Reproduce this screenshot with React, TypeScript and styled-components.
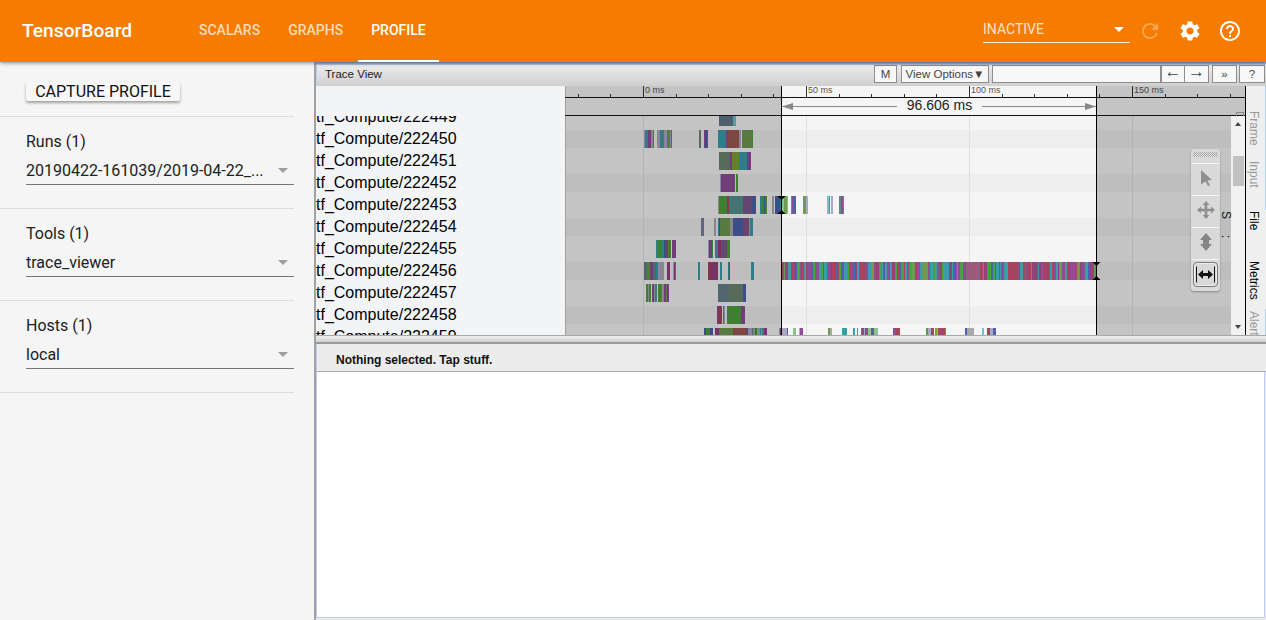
import React from 'react';
import styled, { createGlobalStyle } from 'styled-components';
import { MdRefresh, MdSettings, MdHelpOutline } from 'react-icons/md';

type Bar = [number, number, string];

const C = {
  teal: '#3d9cab',
  green: '#4f9f3f',
  purple: '#8c4f96',
  olive: '#79a52c',
  blue: '#4c62ad',
  slate: '#66808a',
  sage: '#6f8570',
  red: '#9c5a52',
  moss: '#719a50',
  plum: '#93427b',
  rose: '#a8445e',
  gray: '#a9a9a9',
  lilac: '#b0a4c8',
  aqua: '#6cc4cf',
  mint: '#8cc48c',
};

const LOOSE = [C.teal, C.green, C.purple, C.blue, C.slate, C.gray, C.moss, C.lilac, C.teal, C.plum];
const DENSE = [C.rose, C.purple, C.teal, C.plum, C.green, C.blue, C.rose, C.teal, C.moss, C.purple];

// small seeded generator so the stripes stay the same on every load
const stripes = (from: number, to: number, seed: number, colours: string[], gaps = 0): Bar[] => {
  const out: Bar[] = [];
  let s = seed;
  let x = from;
  const next = () => {
    s = (s * 9301 + 49297) % 233280;
    return s / 233280;
  };
  next();
  next();
  next();
  while (x < to) {
    const w = Math.min(to - x, 1 + Math.floor(next() * 3));
    if (next() >= gaps) out.push([x, w, colours[Math.floor(next() * colours.length)]]);
    x += w;
  }
  return out;
};

const ROWS: { top: number; label: string; bars: Bar[] }[] = [
  {
    top: 108,
    label: 'tf_Compute/222449',
    bars: [[719, 14, '#64778a'], [733, 3, C.aqua]],
  },
  {
    top: 130,
    label: 'tf_Compute/222450',
    bars: [
      ...stripes(644, 672, 11, LOOSE, 0.15),
      [699, 2, C.sage], [704, 1, C.purple], [705, 2, C.blue], [707, 1, C.purple],
      [718, 8, C.teal], [726, 2, C.purple], [728, 11, C.red], [739, 2, C.lilac],
      [742, 10, C.moss], [752, 1, C.green],
    ],
  },
  {
    top: 152,
    label: 'tf_Compute/222451',
    bars: [
      [719, 11, C.sage], [730, 2, C.purple], [732, 7, C.olive], [739, 8, C.teal],
      [747, 2, C.purple], [749, 1, C.blue], [750, 1, C.purple],
    ],
  },
  {
    top: 174,
    label: 'tf_Compute/222452',
    bars: [[720, 1, C.lilac], [721, 14, C.purple], [736, 2, C.green]],
  },
  {
    top: 196,
    label: 'tf_Compute/222453',
    bars: [
      [718, 1, C.gray], [719, 8, C.green], [727, 2, C.rose], [729, 14, '#55918f'],
      [743, 9, '#7b5a8c'], ...stripes(752, 756, 5, LOOSE),
      ...stripes(760, 767, 17, [C.teal, C.green, C.blue]), [772, 2, C.gray],
      ...stripes(775, 781, 23, [C.teal, C.blue, C.purple]),
      [782, 2, C.mint], [784, 3, C.moss], [787, 1, C.mint],
      [791, 1, C.teal], [792, 1, C.purple], [793, 3, C.blue],
      [803, 3, C.moss], [806, 2, C.lilac], [827, 2, C.aqua], [829, 1, C.teal],
      [831, 2, C.lilac], [839, 2, C.slate], [841, 2, C.purple], [843, 1, C.green],
    ],
  },
  {
    top: 218,
    label: 'tf_Compute/222454',
    bars: [
      [701, 3, '#75809a'], [714, 2, C.gray], [718, 1, C.teal], [719, 1, C.blue],
      [720, 10, C.moss], [730, 3, C.gray], [733, 10, C.blue], [743, 6, '#85548c'],
      [749, 1, C.gray], [750, 3, C.teal],
    ],
  },
  {
    top: 240,
    label: 'tf_Compute/222455',
    bars: [
      ...stripes(656, 669, 31, [C.teal, C.blue, C.purple, C.green]),
      [669, 2, C.green], [672, 4, C.purple],
      [708, 1, C.lilac], [709, 3, C.purple], [712, 1, C.green],
      [715, 3, C.teal], [718, 3, C.plum], [721, 6, '#7b5a8c'], [727, 3, C.green],
    ],
  },
  {
    top: 262,
    label: 'tf_Compute/222456',
    bars: [
      ...stripes(644, 676, 37, LOOSE, 0.3),
      [698, 2, C.teal], [708, 2, C.rose], [710, 8, C.plum], [720, 2, C.teal],
      [728, 1, C.teal], [729, 1, C.rose], [751, 3, C.teal],
      ...stripes(782, 965, 41, DENSE),
      [965, 1, C.plum], [966, 14, '#9c5a7c'],
      ...stripes(980, 1097, 47, DENSE),
    ],
  },
  {
    top: 284,
    label: 'tf_Compute/222457',
    bars: [
      [646, 2, C.green], [648, 1, C.gray], [649, 2, C.green], [652, 2, C.purple],
      [654, 1, C.gray], [655, 2, C.teal], [658, 3, C.green], [661, 1, C.olive],
      [662, 2, C.gray], [664, 2, C.purple], [666, 1, C.moss], [667, 2, C.purple],
      [718, 11, C.slate], [729, 14, C.sage], [743, 3, C.blue],
    ],
  },
  {
    top: 306,
    label: 'tf_Compute/222458',
    bars: [
      [717, 1, C.purple], [718, 4, C.rose], [723, 1, C.green], [724, 1, C.lilac],
      [727, 14, C.green], [741, 4, C.purple],
    ],
  },
  {
    top: 328,
    label: 'tf_Compute/222459',
    bars: [
      ...stripes(704, 713, 59, [C.teal, C.green, C.blue], 0.1),
      ...stripes(715, 719, 61, LOOSE), [719, 14, C.moss], [733, 14, C.red],
      ...stripes(747, 767, 67, LOOSE, 0.15),
      ...stripes(779, 781, 71, LOOSE),
      ...stripes(782, 806, 73, [C.mint, C.green, C.purple, C.lilac, C.blue], 0.45),
      [828, 2, C.moss], [830, 2, C.gray],
      ...stripes(842, 870, 79, LOOSE, 0.3),
      ...stripes(861, 878, 83, [C.mint, C.purple, C.blue, C.lilac], 0.25),
      ...stripes(890, 900, 89, [C.rose, C.green, C.purple, C.moss], 0.1),
      ...stripes(926, 946, 97, [C.rose, C.green, C.olive, C.blue, C.lilac], 0.2),
      ...stripes(965, 974, 101, [C.gray, C.blue, C.purple], 0.1),
      [982, 2, C.aqua], ...stripes(987, 996, 103, [C.blue, C.rose, C.lilac], 0.1),
    ],
  },
];

const MAJOR = [
  { x: 643, text: '0 ms' },
  { x: 806, text: '50 ms' },
  { x: 969, text: '100 ms' },
  { x: 1132, text: '150 ms' },
];
const MINOR = Array.from({ length: 21 }, (_, i) => 577.8 + i * 32.6).filter((x) => x < 1240);

const GlobalStyle = createGlobalStyle`
  html, body {
    margin: 0;
    height: 100%;
    overflow: hidden;
    background: #f5f5f5;
  }
  #root {
    height: 100%;
  }
`;

const Page = styled.div`
  height: 620px;
  display: flex;
  flex-direction: column;
  font-family: Roboto, sans-serif;
`;

const TopBar = styled.header`
  height: 62px;
  flex: none;
  display: flex;
  align-items: stretch;
  padding-left: 22px;
  background: #f57c00;
  color: #fff;
  box-shadow: 0 1px 4px rgba(0, 0, 0, 0.45);
  position: relative;
  z-index: 2;
`;

const Logo = styled.div`
  display: flex;
  align-items: center;
  width: 109px;
  margin-right: 55px;
  padding-bottom: 2px;
  font-size: 19.2px;
  font-weight: 500;
  white-space: nowrap;
`;

const Tab = styled.div<{ $active?: boolean }>`
  display: flex;
  align-items: center;
  padding: 0 13px;
  margin-right: 2px;
  font-size: 14px;
  font-weight: 500;
  box-sizing: border-box;
  color: ${({ $active }) => ($active ? '#fff' : 'rgba(255, 255, 255, 0.72)')};
  border-bottom: 2px solid ${({ $active }) => ($active ? '#fff' : 'transparent')};
`;

const TopRight = styled.div`
  margin-left: auto;
  display: flex;
  align-items: center;
  padding-right: 24px;
`;

const RunSelect = styled.div`
  width: 147px;
  height: 27px;
  margin-top: -3px;
  box-sizing: border-box;
  display: flex;
  align-items: center;
  justify-content: space-between;
  padding: 0 6px 0 0;
  border-bottom: 1px solid rgba(255, 255, 255, 0.85);
  font-size: 14px;
  font-weight: 400;
  color: rgba(255, 255, 255, 0.8);
`;

const Caret = styled.span<{ $color: string }>`
  width: 0;
  height: 0;
  border-left: 5.5px solid transparent;
  border-right: 5.5px solid transparent;
  border-top: 5.5px solid ${({ $color }) => $color};
`;

const IconSlot = styled.span<{ $faded?: boolean; $gap: number }>`
  display: flex;
  margin-left: ${({ $gap }) => $gap}px;
  color: ${({ $faded }) => ($faded ? 'rgba(255, 255, 255, 0.3)' : '#fff')};
  font-size: 24px;
`;

const Content = styled.div`
  flex: 1;
  min-height: 0;
  display: flex;
`;

const Sidebar = styled.aside`
  width: 314px;
  flex: none;
  box-sizing: border-box;
  padding-right: 20px;
  background: #f5f5f5;
`;

const CaptureArea = styled.div`
  height: 55px;
  box-sizing: border-box;
  padding: 20px 0 0 26px;
  border-bottom: 1px solid #dcdcdc;
`;

const CaptureButton = styled.button`
  display: block;
  width: 154px;
  height: 19px;
  padding: 0;
  border: 0;
  border-radius: 2px;
  background: #f7f7f7;
  box-shadow: 0 2px 3px rgba(0, 0, 0, 0.35);
  font-family: Roboto, sans-serif;
  font-size: 16px;
  color: #111;
  line-height: 19px;
`;

const Section = styled.section`
  height: 92px;
  box-sizing: border-box;
  padding: 15px 0 0 26px;
  border-bottom: 1px solid #dcdcdc;
`;

const SectionTitle = styled.div`
  font-size: 16px;
  line-height: 20px;
  color: #212121;
`;

const SelectRow = styled.div`
  height: 29px;
  margin-top: 4px;
  box-sizing: border-box;
  display: flex;
  align-items: center;
  justify-content: space-between;
  padding: 1px 6px 0 0;
  border-bottom: 1px solid #757575;
  font-size: 16px;
  color: #212121;
`;

const Main = styled.main`
  flex: 1;
  min-width: 0;
  display: flex;
  flex-direction: column;
  border-left: 2px solid #a2a2a2;
  font-family: 'Liberation Sans', Arial, sans-serif;
  background: #ececec;
`;

const TopEdge = styled.div`
  height: 3px;
  flex: none;
  background: linear-gradient(#8f9fc0, #b9c9e8);
`;

const Toolbar = styled.div`
  height: 21px;
  flex: none;
  box-sizing: border-box;
  display: flex;
  align-items: flex-start;
  padding: 0 1px 0 0;
  border-left: 1px solid #b8cff5;
  background: linear-gradient(#ececec, #cfcfcf);
`;

const ToolbarTitle = styled.div`
  flex: 1;
  padding-left: 8px;
  font-size: 11.5px;
  line-height: 18px;
  color: #222;
`;

const ToolButton = styled.button<{ $w: number; $gap?: number; $joined?: boolean; $arrow?: boolean }>`
  width: ${({ $w }) => $w}px;
  height: 18px;
  flex: none;
  margin-left: ${({ $gap }) => $gap ?? 0}px;
  padding: 0 0 ${({ $arrow }) => ($arrow ? 5 : 0)}px;
  border: 1px solid #8e8e8e;
  border-left-width: ${({ $joined }) => ($joined ? 0 : 1)}px;
  background: #f8f8f8;
  font-family: 'Liberation Sans', Arial, sans-serif;
  font-size: ${({ $arrow }) => ($arrow ? 17 : 11.5)}px;
  line-height: ${({ $arrow }) => ($arrow ? 11 : 15)}px;
  color: #444;
`;

const ToolInput = styled.div`
  width: 169px;
  height: 18px;
  flex: none;
  box-sizing: border-box;
  margin-left: 3px;
  border: 1px solid #8e8e8e;
  background: #f8f8f8;
`;

const Viewport = styled.div`
  height: 249px;
  flex: none;
  display: flex;
  position: relative;
  overflow: hidden;
`;

const TraceColumn = styled.div`
  flex: 1;
  min-width: 0;
  display: flex;
  flex-direction: column;
`;

const RulerRow = styled.div`
  height: 30px;
  flex: none;
  display: flex;
  background: #f3f4f6;
`;

const LabelGutter = styled.div`
  width: 249px;
  flex: none;
  overflow: hidden;
  background: #f3f4f6;
`;

const Drawing = styled.svg`
  display: block;
  flex: none;
`;

const TrackRow = styled.div`
  flex: 1;
  min-height: 0;
  display: flex;
`;

const LabelList = styled.div`
  margin-top: -8px;
`;

const TrackLabel = styled.div`
  height: 18px;
  margin-bottom: 4px;
  font-size: 16px;
  line-height: 18px;
  color: #000;
  white-space: nowrap;
`;

const Scrollbar = styled.div`
  width: 14px;
  flex: none;
  display: flex;
  flex-direction: column;
  align-items: center;
  background: #f1f1f1;
`;

const ScrollArrow = styled.span<{ $down?: boolean }>`
  width: 0;
  height: 0;
  margin-top: ${({ $down }) => ($down ? '139px' : '6px')};
  border-left: 3.5px solid transparent;
  border-right: 3.5px solid transparent;
  ${({ $down }) => ($down ? 'border-top: 4px solid #444;' : 'border-bottom: 4px solid #444;')}
`;

const ScrollThumb = styled.div`
  width: 11px;
  height: 30px;
  margin-top: 30px;
  background: #c1c1c1;
`;

const SideTabs = styled.div`
  width: 20px;
  flex: none;
  overflow: hidden;
  border-left: 1px solid #000;
  background: #efefef;
`;

const SideTab = styled.div<{ $height: number; $pad: number; $on?: boolean }>`
  height: ${({ $height }) => $height}px;
  box-sizing: border-box;
  padding-top: ${({ $pad }) => $pad}px;
  padding-right: 3px;
  writing-mode: vertical-rl;
  font-size: 12px;
  line-height: 16px;
  white-space: nowrap;
  color: ${({ $on }) => ($on ? '#000' : '#999')};
  border-right: 1px solid ${({ $on }) => ($on ? 'transparent' : '#b4cdf6')};
`;

const Fragment = styled.div`
  position: absolute;
  right: 34px;
  top: 125px;
  writing-mode: vertical-rl;
  font-size: 12px;
  line-height: 12px;
  letter-spacing: 16px;
  color: #111;
`;

const Palette = styled.div`
  position: absolute;
  right: 46px;
  top: 63px;
  width: 29px;
  height: 142px;
  box-sizing: border-box;
  border-radius: 3px;
  background: #d9d9d9;
  box-shadow: 0 1px 2px rgba(0, 0, 0, 0.3);
`;

const Grip = styled.div`
  height: 14px;
  box-sizing: border-box;
  margin: 0 2px;
  padding-top: 3px;
  &::before {
    content: '';
    display: block;
    height: 5px;
    background: repeating-conic-gradient(#a3a3a3 0 25%, #e6e6e6 0 50%) 0 0 / 2px 2px;
  }
`;

const PaletteSlot = styled.div<{ $active?: boolean }>`
  height: 32px;
  box-sizing: border-box;
  margin: 0 1px;
  display: flex;
  align-items: center;
  justify-content: center;
  padding-bottom: 3px;
  border-top: 1px solid #f3f3f3;
  ${({ $active }) =>
    $active &&
    `& > svg {
      box-sizing: border-box;
      width: 25px;
      height: 25px;
      padding: 1px;
      border: 1px solid #777;
      border-radius: 4px;
      box-shadow: inset 0 0 0 1px #efefef;
    }`}
`;

const Splitter = styled.div`
  height: 9px;
  flex: none;
  box-sizing: border-box;
  border-top: 1px solid #a8a8a8;
  border-bottom: 2px solid #9a9a9a;
  background: linear-gradient(#f0f0f0, #cfcfcf);
`;

const AnalysisHeader = styled.div`
  height: 28px;
  flex: none;
  box-sizing: border-box;
  padding-left: 19px;
  border-bottom: 1px solid #a9a9a9;
  border-left: 1px solid #b8cff5;
  background: #ececec;
  font-size: 12px;
  font-weight: 700;
  line-height: 32px;
  color: #111;
`;

const AnalysisBody = styled.div`
  flex: 1;
  margin: 0 1px 2px 0;
  border-left: 1px solid #b8cff5;
  border-right: 1px solid #b8cff5;
  border-bottom: 1px solid #b8cff5;
  background: #fff;
`;

const SECTIONS = [
  { title: 'Runs (1)', value: '20190422-161039/2019-04-22_...' },
  { title: 'Tools (1)', value: 'trace_viewer' },
  { title: 'Hosts (1)', value: 'local' },
];

const Ruler: React.FC = () => (
  <Drawing width={680} height={30} viewBox="565 86 680 30" fontFamily="'Liberation Sans', Arial, sans-serif">
    <rect x={565} y={86} width={680} height={30} fill="#f5f5f5" />
    {MAJOR.map((m) => (
      <g key={m.x}>
        <rect x={m.x} y={86} width={1} height={11} fill="#333" />
        <text x={m.x + 2} y={93} fontSize={9} fill="#555">
          {m.text}
        </text>
      </g>
    ))}
    {MINOR.map((x) => (
      <rect key={x} x={Math.round(x)} y={94} width={1} height={3} fill="#333" />
    ))}
    <rect x={565} y={86} width={216} height={30} fill="rgba(0,0,0,0.2)" />
    <rect x={1097} y={86} width={148} height={30} fill="rgba(0,0,0,0.2)" />
    <rect x={565} y={86} width={1} height={30} fill="#a0a0a0" />
    <rect x={565} y={97} width={680} height={1} fill="#111" />
    <rect x={565} y={115} width={680} height={1} fill="#111" />
    <rect x={781} y={86} width={1} height={30} fill="#000" />
    <rect x={1096} y={86} width={1} height={30} fill="#000" />
    <rect x={782} y={106} width={115} height={1} fill="#888" />
    <rect x={982} y={106} width={114} height={1} fill="#888" />
    <polygon points="782,106.5 793,103 793,110" fill="#888" />
    <polygon points="1096,106.5 1085,103 1085,110" fill="#888" />
    <text x={939.5} y={110} fontSize={14} textAnchor="middle" fill="#222">
      96.606 ms
    </text>
    <rect x={1236.5} y={112.5} width={7} height={6} fill="none" stroke="#888" />
  </Drawing>
);

const Tracks: React.FC = () => (
  <Drawing width={666} height={219} viewBox="565 116 666 219" shapeRendering="crispEdges">
    <rect x={565} y={100} width={666} height={240} fill="#f5f5f5" />
    {ROWS.filter((_, i) => i % 2 === 1).map((row) => (
      <rect key={row.top} x={565} y={row.top} width={666} height={18} fill="#eeeeee" />
    ))}
    {MAJOR.map((m) => (
      <rect key={m.x} x={m.x} y={116} width={1} height={219} fill="#e0e0e0" />
    ))}
    {ROWS.map((row) =>
      row.bars.map(([x, w, fill], i) => (
        <rect key={`${row.top}-${i}`} x={x} y={row.top} width={w} height={18} fill={fill} />
      )),
    )}
    <rect x={565} y={116} width={216} height={219} fill="rgba(0,0,0,0.2)" />
    <rect x={1097} y={116} width={134} height={219} fill="rgba(0,0,0,0.2)" />
    <rect x={565} y={116} width={1} height={219} fill="#a0a0a0" />
    <rect x={781} y={116} width={1} height={219} fill="#000" />
    <rect x={1096} y={116} width={1} height={219} fill="#000" />
    <g shapeRendering="auto" fill="#000">
      <polygon points="777.5,196 785.5,196 781.5,200" />
      <polygon points="777.5,214 785.5,214 781.5,210" />
      <polygon points="1092.5,262 1100.5,262 1096.5,266" />
      <polygon points="1092.5,280 1100.5,280 1096.5,276" />
    </g>
  </Drawing>
);

const PointerIcon = () => (
  <svg width="24" height="24" viewBox="0 0 24 24">
    <polygon points="7,4 18,14 13.5,14.5 16,19.5 14,20 11.5,15.5 7,18.5" fill="#8f8f8f" />
  </svg>
);

const PanIcon = () => (
  <svg width="24" height="24" viewBox="0 0 24 24">
    <path
      d="M12 3l3.5 4H13.3v3.7H17V8.5l4 3.5-4 3.5v-2.2h-3.7V17h2.2L12 21l-3.5-4h2.2v-3.7H7v2.2L3 12l4-3.5v2.2h3.7V7H8.5z"
      fill="#8f8f8f"
    />
  </svg>
);

const ZoomIcon = () => (
  <svg width="24" height="24" viewBox="0 0 24 24">
    <path d="M12 3l6 7h-3v4h3l-6 7-6-7h3v-4H6z" fill="#858585" />
  </svg>
);

const TimelineIcon = () => (
  <svg viewBox="0 0 21 21">
    <path d="M1.5 2.5v16M19.5 2.5v16" stroke="#111" strokeWidth="1" fill="none" />
    <path d="M3 10.5l5-4.5v3h5V6l5 4.5-5 4.5v-3H8v3z" fill="#111" />
  </svg>
);

const App: React.FC = () => (
  <Page>
    <GlobalStyle />
    <TopBar>
      <Logo>TensorBoard</Logo>
      <Tab>SCALARS</Tab>
      <Tab>GRAPHS</Tab>
      <Tab $active>PROFILE</Tab>
      <TopRight>
        <RunSelect>
          INACTIVE
          <Caret $color="#fff" />
        </RunSelect>
        <IconSlot $faded $gap={8}>
          <MdRefresh />
        </IconSlot>
        <IconSlot $gap={16}>
          <MdSettings />
        </IconSlot>
        <IconSlot $gap={16}>
          <MdHelpOutline />
        </IconSlot>
      </TopRight>
    </TopBar>
    <Content>
      <Sidebar>
        <CaptureArea>
          <CaptureButton>CAPTURE PROFILE</CaptureButton>
        </CaptureArea>
        {SECTIONS.map((section) => (
          <Section key={section.title}>
            <SectionTitle>{section.title}</SectionTitle>
            <SelectRow>
              {section.value}
              <Caret $color="#9e9e9e" />
            </SelectRow>
          </Section>
        ))}
      </Sidebar>
      <Main>
        <TopEdge />
        <Toolbar>
          <ToolbarTitle>Trace View</ToolbarTitle>
          <ToolButton $w={23}>M</ToolButton>
          <ToolButton $w={88} $gap={4}>
            View Options▼
          </ToolButton>
          <ToolInput />
          <ToolButton $w={24} $arrow>
            ←
          </ToolButton>
          <ToolButton $w={24} $joined $arrow>
            →
          </ToolButton>
          <ToolButton $w={25} $gap={3}>
            »
          </ToolButton>
          <ToolButton $w={26} $gap={2}>
            ?
          </ToolButton>
        </Toolbar>
        <Viewport>
          <TraceColumn>
            <RulerRow>
              <LabelGutter />
              <Ruler />
            </RulerRow>
            <TrackRow>
              <LabelGutter>
                <LabelList>
                  {ROWS.map((row) => (
                    <TrackLabel key={row.label}>{row.label}</TrackLabel>
                  ))}
                </LabelList>
              </LabelGutter>
              <Tracks />
              <Scrollbar>
                <ScrollArrow />
                <ScrollThumb />
                <ScrollArrow $down />
              </Scrollbar>
            </TrackRow>
          </TraceColumn>
          <SideTabs>
            <SideTab $height={75} $pad={25}>
              Frame
            </SideTab>
            <SideTab $height={49} $pad={0}>
              Input
            </SideTab>
            <SideTab $height={49} $pad={1} $on>
              File
            </SideTab>
            <SideTab $height={50} $pad={2} $on>
              Metrics
            </SideTab>
            <SideTab $height={26} $pad={2}>
              Alerts
            </SideTab>
          </SideTabs>
          <Fragment>S:</Fragment>
          <Palette>
            <Grip />
            <PaletteSlot>
              <PointerIcon />
            </PaletteSlot>
            <PaletteSlot>
              <PanIcon />
            </PaletteSlot>
            <PaletteSlot>
              <ZoomIcon />
            </PaletteSlot>
            <PaletteSlot $active>
              <TimelineIcon />
            </PaletteSlot>
          </Palette>
        </Viewport>
        <Splitter />
        <AnalysisHeader>Nothing selected. Tap stuff.</AnalysisHeader>
        <AnalysisBody />
      </Main>
    </Content>
  </Page>
);

export default App;
